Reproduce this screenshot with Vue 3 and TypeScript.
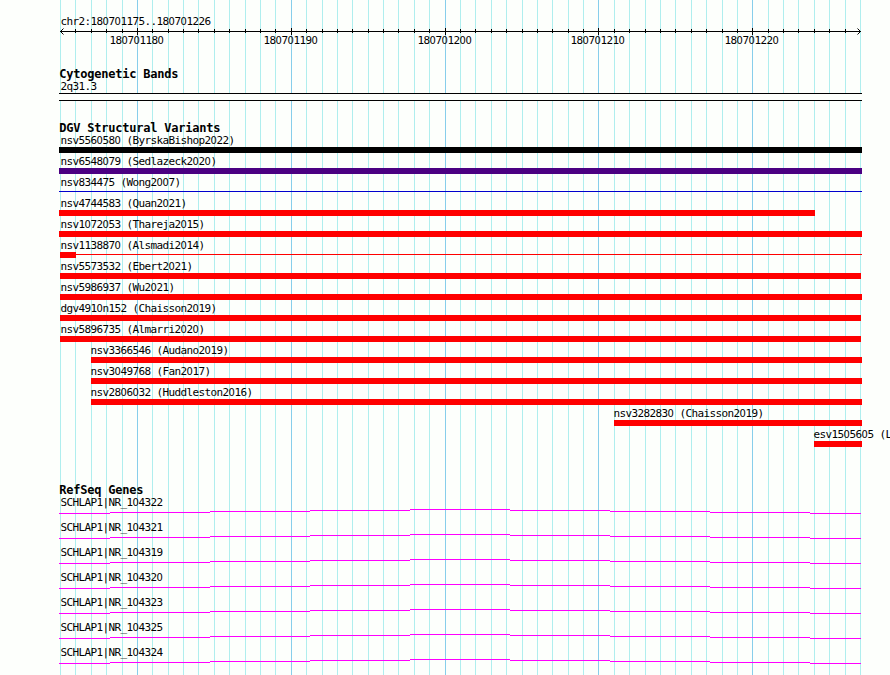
<script setup lang="ts">
interface Variant {
  label: string
  color: string
  start: number
  end: number
  /** Width of the solid block; the rest of the span is a hairline. */
  block?: number
}

const WIDTH = 890
const HEIGHT = 675
const ORIGIN = 60
const STEP = 800 / 52
const FIRST_BASE = 180701175

const grid = Array.from({ length: 53 }, (_, i) => ({
  x: Math.round(ORIGIN + i * STEP),
  base: FIRST_BASE + i,
  major: i % 10 === 5,
}))
const ticks = grid.slice(1, -1)
const majors = grid.filter((g) => g.major)

const RED = '#ff0000'
const variants: Variant[] = [
  { label: 'nsv5560580 (ByrskaBishop2022)', color: '#000000', start: 59, end: 862 },
  { label: 'nsv6548079 (Sedlazeck2020)', color: '#4b0082', start: 59, end: 862 },
  { label: 'nsv834475 (Wong2007)', color: '#0000cd', start: 59, end: 862, block: 0 },
  { label: 'nsv4744583 (Quan2021)', color: RED, start: 59, end: 815 },
  { label: 'nsv1072053 (Thareja2015)', color: RED, start: 59, end: 862 },
  { label: 'nsv1138870 (Alsmadi2014)', color: RED, start: 60, end: 862, block: 16 },
  { label: 'nsv5573532 (Ebert2021)', color: RED, start: 60, end: 861 },
  { label: 'nsv5986937 (Wu2021)', color: RED, start: 60, end: 862 },
  { label: 'dgv4910n152 (Chaisson2019)', color: RED, start: 60, end: 861 },
  { label: 'nsv5896735 (Almarri2020)', color: RED, start: 60, end: 861 },
  { label: 'nsv3366546 (Audano2019)', color: RED, start: 91, end: 862 },
  { label: 'nsv3049768 (Fan2017)', color: RED, start: 91, end: 862 },
  { label: 'nsv2806032 (Huddleston2016)', color: RED, start: 91, end: 862 },
  { label: 'nsv3282830 (Chaisson2019)', color: RED, start: 614, end: 862 },
  { label: 'esv1505605 (L', color: RED, start: 814, end: 862 },
]

const genes = [104322, 104321, 104319, 104320, 104323, 104325, 104324].map((id) => `SCHLAP1|NR_${id}`)

// Intron line drawn as one-pixel steps rising to the middle of the view.
const introns = [
  { x: 59, w: 51, y: 4 },
  { x: 110, w: 100, y: 3 },
  { x: 210, w: 100, y: 2 },
  { x: 310, w: 100, y: 1 },
  { x: 410, w: 100, y: 0 },
  { x: 510, w: 100, y: 1 },
  { x: 610, w: 100, y: 2 },
  { x: 710, w: 100, y: 3 },
  { x: 810, w: 51, y: 4 },
]

// Zeros are set in a face whose zero has no inner dot.
const runs = (text: string): string[] => text.split(/(0+)/).filter(Boolean)
const isZero = (run: string): boolean => run.startsWith('0')
const labelX = (v: Variant): number => (v.start <= 60 ? 60.4 : v.start - 0.6)
</script>

<template>
  <main class="browser">
    <svg class="grid" :width="WIDTH" :height="HEIGHT" shape-rendering="crispEdges" aria-hidden="true">
      <rect
        v-for="g in grid"
        :key="g.base"
        :x="g.x"
        y="0"
        width="1"
        :height="HEIGHT"
        :class="g.major ? 'major' : 'minor'"
      />
    </svg>

    <section class="ruler">
      <div class="label"><span v-for="(r, i) in runs('chr2:180701175..180701226')" :key="i" :class="{ zero: isZero(r) }">{{ r }}</span></div>
      <svg class="scale" :width="WIDTH" height="20">
        <g shape-rendering="crispEdges">
          <rect x="60" y="3" width="801" height="1" />
          <rect
            v-for="t in ticks"
            :key="t.base"
            :x="t.x"
            :y="t.major ? 0 : 1"
            width="1"
            :height="t.major ? 7 : 4"
          />
        </g>
        <path class="arrow" d="M63.5 .5L60.5 3.5L63.5 6.5M857.5 .5L860.5 3.5L857.5 6.5" />
        <text v-for="m in majors" :key="m.base" :x="m.x - 27.6" y="16"><tspan v-for="(r, i) in runs(String(m.base))" :key="i" :class="{ zero: isZero(r) }">{{ r }}</tspan></text>
      </svg>
    </section>

    <section class="track bands">
      <h2>Cytogenetic Bands</h2>
      <div class="label">2q31.3</div>
      <div class="band"></div>
    </section>

    <section class="track variants">
      <h2>DGV Structural Variants</h2>
      <div v-for="v in variants" :key="v.label" class="variant">
        <div class="label" :style="{ paddingLeft: labelX(v) + 'px' }"><span v-for="(r, i) in runs(v.label)" :key="i" :class="{ zero: isZero(r) }">{{ r }}</span></div>
        <svg :width="WIDTH" height="8" shape-rendering="crispEdges">
          <rect :x="v.start" y="0" :width="v.block ?? v.end - v.start" height="6" :fill="v.color" />
          <rect v-if="v.block !== undefined" :x="v.start" y="2" :width="v.end - v.start" height="1" :fill="v.color" />
        </svg>
      </div>
    </section>

    <section class="track genes">
      <h2>RefSeq Genes</h2>
      <div v-for="gene in genes" :key="gene" class="gene">
        <div class="label"><span v-for="(r, i) in runs(gene)" :key="i" :class="{ zero: isZero(r) }">{{ r }}</span></div>
        <svg :width="WIDTH" height="12" shape-rendering="crispEdges">
          <rect v-for="s in introns" :key="s.x" class="intron" :x="s.x" :y="s.y" :width="s.w" height="1" />
        </svg>
      </div>
    </section>
  </main>
</template>

<style>
body {
  background: #fdfffc;
}
</style>

<style scoped>
.browser {
  position: relative;
  display: flex;
  flex-direction: column;
  box-sizing: border-box;
  width: 890px;
  height: 675px;
  padding-top: 15px;
  overflow: hidden;
  background: #fdfffc;
  color: #000;
  font: 11px/13px "DejaVu Sans Mono", "Liberation Mono", monospace;
  letter-spacing: -0.623px;
  font-variant-ligatures: none;
}
.grid {
  position: absolute;
  top: 0;
  left: 0;
}
.minor {
  fill: #afeeee;
}
.major {
  fill: #87ceeb;
}
section {
  position: relative;
}
svg {
  display: block;
}
.label {
  height: 13px;
  padding-left: 60.4px;
  white-space: pre;
}
.zero {
  font-family: "DejaVu Sans Condensed", "DejaVu Sans", sans-serif;
  font-stretch: condensed;
  letter-spacing: -0.298px;
}
.arrow {
  fill: none;
  stroke: #000;
  stroke-width: 1;
}
h2 {
  height: 12px;
  margin: 0;
  padding-left: 59.3px;
  font-size: 12px;
  font-weight: bold;
  line-height: 12px;
  letter-spacing: -0.224px;
  white-space: pre;
}
.bands {
  margin-top: 20px;
}
.band {
  box-sizing: border-box;
  width: 803px;
  height: 8px;
  margin-left: 59px;
  border: solid #000;
  border-width: 1px 0;
  background: #fdfffc;
}
.variants {
  margin-top: 21px;
}
.variant {
  height: 21px;
}
.genes {
  margin-top: 35px;
}
.gene {
  height: 25px;
}
.intron {
  fill: #f0f;
}
</style>
